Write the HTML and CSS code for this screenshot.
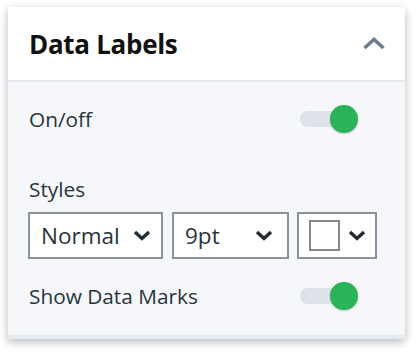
FILE: index.html
```html
<html>
  <head>
    <link rel="stylesheet" href="styles.css">
  </head>
  <body>
    <div class="panel">
      <div class="panel-header">
        <h2>Data Labels</h2>
        <svg class="collapse" width="24" height="14" viewBox="0 0 24 14">
          <polyline points="2.5,12 12,3.5 21.5,12" fill="none" stroke="#6e7f8a" stroke-width="3.6"/>
        </svg>
      </div>
      <div class="panel-body">
        <div class="row">
          <span>On/off</span>
          <div class="toggle on"><div class="track"></div><div class="knob"></div></div>
        </div>

        <div class="label">Styles</div>
        <div class="selects">
          <div class="dropdown weight">
            <span>Normal</span>
            <svg class="chev" width="18" height="11" viewBox="0 0 18 11"><polyline points="2,2 9,8.5 16,2" fill="none" stroke="#222c33" stroke-width="3.4"/></svg>
          </div>
          <div class="dropdown size">
            <span>9pt</span>
            <svg class="chev" width="18" height="11" viewBox="0 0 18 11"><polyline points="2,2 9,8.5 16,2" fill="none" stroke="#222c33" stroke-width="3.4"/></svg>
          </div>
          <div class="dropdown colour">
            <div class="swatch"></div>
            <svg class="chev" width="18" height="11" viewBox="0 0 18 11"><polyline points="2,2 9,8.5 16,2" fill="none" stroke="#222c33" stroke-width="3.4"/></svg>
          </div>
        </div>

        <div class="row marks">
          <span>Show Data Marks</span>
          <div class="toggle on"><div class="track"></div><div class="knob"></div></div>
        </div>
      </div>
    </div>
  </body>
</html>
```

FILE: styles.css
```css
body {
  margin: 0;
  padding: 7px 0 0 8px;
  background: #fff;
  font-family: "Open Sans", "Noto Sans", sans-serif;
  color: #27343c;
}

.panel {
  width: 397px;
  box-shadow: 0 3px 9px rgba(0, 0, 0, 0.28);
}

.panel-header {
  height: 73px;
  background: #fff;
  border-bottom: 2px solid #e3e8ec;
  display: flex;
  align-items: center;
  justify-content: space-between;
  padding: 0 19px 0 21px;
}

.panel-header h2 {
  margin: 0;
  font-size: 26px;
  font-weight: 700;
  color: #111;
  letter-spacing: -0.3px;
}

.collapse {
  margin-top: -2px;
}

.panel-body {
  background: #f5f7fa;
  padding: 23px 26px 25px 21px;
  border-bottom: 4px solid #e6ebef;
}

.row {
  height: 28px;
  display: flex;
  align-items: center;
  justify-content: space-between;
  font-size: 20.8px;
  padding-right: 21px;
}

.label {
  margin-top: 44px;
  font-size: 20.8px;
  line-height: 24px;
}

.selects {
  display: flex;
  gap: 9px;
  margin: 11px 0 0 -1px;
}

.dropdown {
  height: 43px;
  background: #fff;
  border: 2px solid #8c9396;
  display: flex;
  align-items: center;
  justify-content: space-between;
  padding: 0 10px 0 11px;
  font-size: 22.5px;
}

.dropdown.weight {
  width: 110px;
}

.dropdown.size {
  width: 88px;
  padding-right: 14px;
}

.dropdown.colour {
  width: 57px;
  margin-left: -1px;
  padding: 0 9px 0 10px;
}

.swatch {
  width: 27px;
  height: 27px;
  border: 2px solid #888;
  background: #fff;
}

.marks {
  margin-top: 23px;
}

.toggle {
  position: relative;
  width: 58px;
  height: 28px;
}

.toggle .track {
  position: absolute;
  left: 0;
  top: 6px;
  width: 42px;
  height: 16px;
  border-radius: 8px;
  background: #dde3e8;
}

.toggle .knob {
  position: absolute;
  right: 0;
  top: 0;
  width: 28px;
  height: 28px;
  border-radius: 50%;
  background: #2bb35a;
  box-shadow: 0 1px 2px rgba(0, 0, 0, 0.2);
}
```
